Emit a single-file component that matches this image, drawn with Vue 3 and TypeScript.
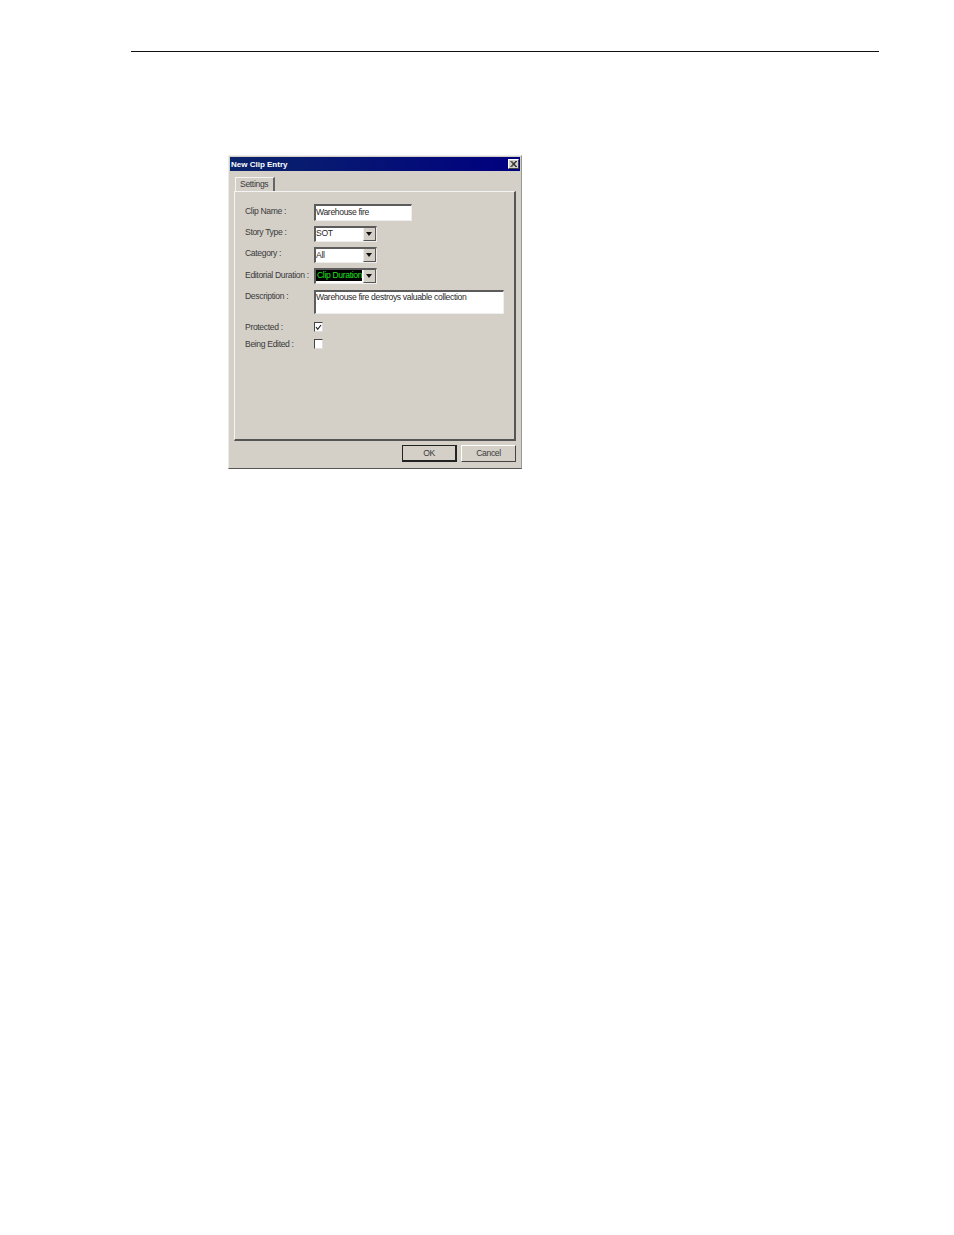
<script setup lang="ts">
const clipName = 'Warehouse fire'
const description = 'Warehouse fire destroys valuable collection'
</script>

<template>
  <div class="page">
    <div class="rule"></div>
    <div class="dialog">
      <div class="titlebar">
        <span class="title">New Clip Entry</span>
        <span class="close">
          <svg width="7" height="6" viewBox="0 0 7 6"><path d="M0.5 0 L6 6 M1.5 0 L7 6 M6 0 L0.5 6 M7 0 L1.5 6" stroke="#222" stroke-width="0.9" fill="none" /></svg>
        </span>
      </div>
      <div class="tabs">
        <div class="tab">Settings</div>
      </div>
      <div class="pane">
        <div class="row name-row">
          <label>Clip Name :</label>
          <div class="field clip-name">{{ clipName }}</div>
        </div>
        <div class="row story-row">
          <label>Story Type :</label>
          <div class="field combo">
            <span class="value">SOT</span>
            <span class="arrow"></span>
          </div>
        </div>
        <div class="row cat-row">
          <label>Category :</label>
          <div class="field combo">
            <span class="value">All</span>
            <span class="arrow"></span>
          </div>
        </div>
        <div class="row dur-row">
          <label>Editorial Duration :</label>
          <div class="field combo">
            <span class="value selected">Clip Duration</span>
            <span class="arrow"></span>
          </div>
        </div>
        <div class="row desc-row">
          <label>Description :</label>
          <div class="field desc">{{ description }}</div>
        </div>
        <div class="row check-row protected">
          <label>Protected :</label>
          <div class="check">
            <svg width="7" height="7" viewBox="0 0 7 7"><path d="M1 3 L2.7 5.3 L6 1" stroke="#222" stroke-width="1.2" fill="none" /></svg>
          </div>
        </div>
        <div class="row check-row edited">
          <label>Being Edited :</label>
          <div class="check"></div>
        </div>
      </div>
      <div class="buttons">
        <button class="btn default">OK</button>
        <button class="btn">Cancel</button>
      </div>
    </div>
  </div>
</template>

<style>
html, body {
  background: #fff;
}
</style>

<style scoped>
.page {
  height: 1235px;
  padding-top: 51px;
  box-sizing: border-box;
  font-family: "Liberation Sans", Arial, sans-serif;
  font-size: 8.6px;
  letter-spacing: -0.35px;
  color: #3a3a3a;
}

.rule {
  width: 748px;
  height: 1px;
  margin-left: 131px;
  background: #111;
}

.dialog {
  width: 294px;
  height: 314px;
  margin: 103px 0 0 228px;
  box-sizing: border-box;
  padding: 1px 1px 0 1px;
  background: #d4d0c8;
  border-top: 1px solid #ececec;
  border-left: 1px solid #ececec;
  border-right: 1px solid #999;
  border-bottom: 1px solid #555;
}

.titlebar {
  height: 14px;
  display: flex;
  align-items: center;
  justify-content: space-between;
  padding: 0 1px 0 1px;
  background: linear-gradient(90deg, #0a246a, #000080);
}

.title {
  color: #fff;
  font-weight: bold;
  font-size: 8px;
  letter-spacing: 0;
}

.close {
  width: 11px;
  height: 10px;
  display: flex;
  align-items: center;
  justify-content: center;
  background: #d4d0c8;
  border: 1px solid;
  box-sizing: border-box;
  border-color: #fff #444 #444 #fff;
}

.tabs {
  display: flex;
  padding: 6px 0 0 5px;
}

.tab {
  width: 40px;
  height: 14px;
  box-sizing: border-box;
  padding: 0 0 0 4px;
  line-height: 12px;
  border-top: 1px solid #f4f4f4;
  border-left: 1px solid #f4f4f4;
  border-right: 2px solid #666;
}

.pane {
  width: 282px;
  height: 250px;
  margin-left: 4px;
  box-sizing: border-box;
  border-top: 1px solid #f4f4f4;
  border-left: 1px solid #f4f4f4;
  border-right: 2px solid #555;
  border-bottom: 2px solid #555;
}

.row {
  display: flex;
  align-items: flex-start;
}

.row label {
  width: 69px;
  margin-left: 10px;
  flex: none;
  line-height: 11px;
  white-space: nowrap;
}

.name-row { margin-top: 12px; }
.story-row { margin-top: 5px; }
.cat-row { margin-top: 5px; }
.dur-row { margin-top: 5px; }
.desc-row { margin-top: 6px; }
.protected { margin-top: 8px; }
.edited { margin-top: 6px; }

.name-row label { margin-top: 2px; }
.story-row label, .cat-row label { margin-top: 1px; }
.dur-row label { margin-top: 2px; }
.desc-row label { margin-top: 1px; }

.field {
  box-sizing: border-box;
  background: #fff;
  border-top: 2px solid #5c5c5c;
  border-left: 2px solid #5c5c5c;
  border-right: 1px solid #eee;
  border-bottom: 1px solid #eee;
  color: #2a2a2a;
  white-space: nowrap;
}

.clip-name {
  width: 98px;
  height: 17px;
  line-height: 12px;
}

.combo {
  width: 63px;
  height: 16px;
  display: flex;
  align-items: stretch;
  justify-content: space-between;
}

.value {
  margin: 0;
  line-height: 11px;
}

.cat-row .value {
  margin-top: 1px;
}

.value.selected {
  width: 46px;
  height: 11px;
  margin: 0;
  background: #000;
  color: #1fe21f;
  padding-left: 1px;
  box-sizing: border-box;
  overflow: hidden;
}

.arrow {
  width: 11px;
  position: relative;
  background: #d4d0c8;
  border-left: 1px solid #eee;
  border-right: 1px solid #555;
  border-bottom: 1px solid #555;
}

.arrow::after {
  content: "";
  position: absolute;
  left: 2px;
  top: 4px;
  border-top: 4px solid #111;
  border-left: 3px solid transparent;
  border-right: 3px solid transparent;
}

.desc {
  width: 190px;
  height: 24px;
  line-height: 11px;
}

.check {
  width: 9px;
  height: 10px;
  box-sizing: border-box;
  display: flex;
  align-items: center;
  justify-content: center;
  background: #fff;
  border-top: 1px solid #444;
  border-left: 1px solid #444;
  border-right: 1px solid #ddd;
  border-bottom: 1px solid #ddd;
}

.buttons {
  display: flex;
  justify-content: flex-end;
  gap: 4px;
  width: 286px;
  margin-top: 4px;
}

.btn {
  width: 55px;
  height: 17px;
  padding: 0 0 1px;
  box-sizing: border-box;
  background: #d4d0c8;
  font: inherit;
  letter-spacing: inherit;
  color: #3a3a3a;
  border: 1px solid;
  border-color: #fff #444 #444 #fff;
}

.btn.default {
  padding: 0;
  border: 1px solid #222;
  border-bottom-width: 2px;
  border-right-width: 2px;
}
</style>
